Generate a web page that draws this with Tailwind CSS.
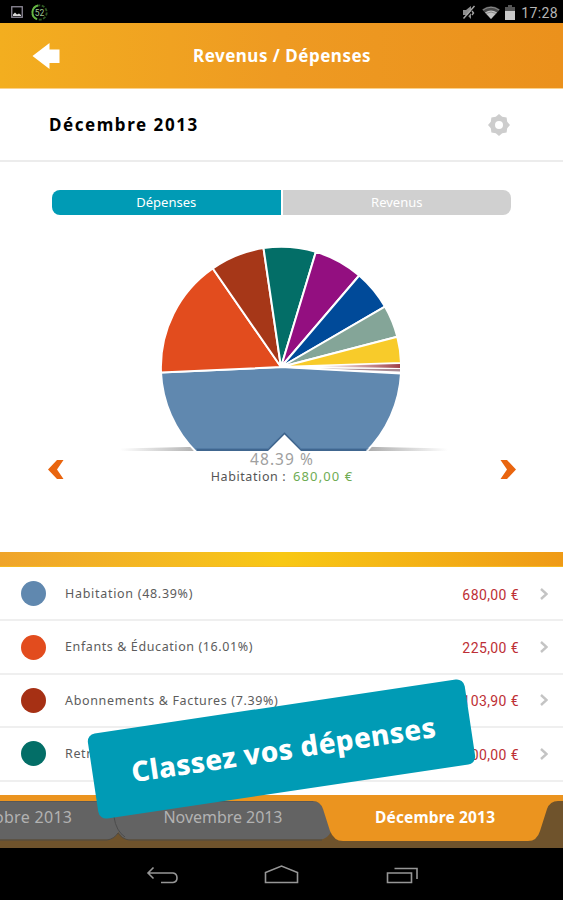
<!DOCTYPE html>
<html lang="fr">
  <head>
    <meta charset="UTF-8" />
    <meta name="viewport" content="width=device-width, initial-scale=1.0" />
    <title>Revenus / Dépenses</title>
    <script src="https://cdn.jsdelivr.net/npm/@tailwindcss/browser@4"></script>
  </head>
  <body class="bg-black">
    <div
      class="relative w-[563px] h-[900px] overflow-hidden flex flex-col bg-white font-['Noto_Sans',sans-serif]"
    >
      <!-- Status bar -->
      <div class="h-[23px] shrink-0 bg-black flex items-center justify-between pl-[11px] pr-[5px]">
        <div class="flex items-center gap-2 pt-px">
          <svg class="w-3 h-3" viewBox="0 0 12 12">
            <rect x=".75" y=".75" width="10.5" height="10.5" fill="none" stroke="#8f8b99" stroke-width="1.3" />
            <path d="M2 10V8.500L4 6.500L6 8.500L8 7.500L10 9V10Z" fill="#d8d8d8" />
          </svg>
          <svg class="w-[17px] h-[17px]" viewBox="0 0 17 17">
            <circle cx="8.500" cy="8.500" r="7.200" fill="none" stroke="#2d5a22" stroke-width="1.800" stroke-dasharray="3 1.500" />
            <path d="M7 1.500A7.200 7.200 0 0 0 6 15.200" fill="none" stroke="#66b843" stroke-width="1.800" />
            <text x="8.500" y="11.500" font-size="8.500" text-anchor="middle" fill="#9fc793" font-family="Roboto">52</text>
          </svg>
        </div>
        <div class="flex items-center pt-[2px]">
          <svg class="w-[14px] h-[15px] mr-[6px]" viewBox="0 0 14 15">
            <path d="M1 5H4L9 1V14L5 10H1Z" fill="#8d8d8d" />
            <path d="M13.500 2L2.500 14.500" stroke="#000" stroke-width="1.200" />
            <path d="M12.500 1L1.500 13.500M10 6L11.500 8L10 10" stroke="#a5a5a5" stroke-width="1.400" fill="none" />
          </svg>
          <svg class="w-[18px] h-[13px] mr-[5px]" viewBox="0 0 18 13">
            <path d="M0 3.500Q9-3 18 3.500L9 13Z" fill="#4a4a4a" />
            <path d="M3 6.500Q9 2.500 15 6.500L9 13Z" fill="#c2c2c2" />
            <path d="M1 4Q9-1.500 17 4M4 7.500Q9 4.500 14 7.500" stroke="#8b8b8b" fill="none" />
          </svg>
          <svg class="w-[10px] h-[15px] mr-[6px]" viewBox="0 0 10 15">
            <path d="M3 0H7V2H10V15H0V2H3Z" fill="#555" />
            <path d="M0 6H10V15H0Z" fill="#c9c9c9" />
          </svg>
          <span class="font-['Roboto'] text-[14px] leading-none tracking-[0.4px] text-[#b5b5b5]">17:28</span>
        </div>
      </div>

      <!-- Header -->
      <div
        class="h-[66px] shrink-0 flex items-center border-b border-[#fbd28c] bg-linear-to-r from-[#f3ae1f] via-[#ee9a22] to-[#eb911c]"
      >
        <svg class="w-[28px] h-[26px] ml-[32px]" viewBox="0 0 28 26">
          <path d="M.5 13L17.500 0V6.500H27.500V20H17.500V26Z" fill="#fff" />
        </svg>
        <h1 class="ml-[133px] text-[17px] font-bold text-white tracking-[0.5px] whitespace-nowrap">
          Revenus / Dépenses
        </h1>
      </div>

      <!-- Month -->
      <div class="h-[73px] shrink-0 flex items-center justify-between pl-[49px] pr-[53px] border-b-2 border-[#ececec]">
        <h2 class="text-[17px] font-bold text-black tracking-[1.55px]">Décembre 2013</h2>
        <svg class="w-[22px] h-[22px]" viewBox="-11 -11 22 22">
          <path
            d="M0-11L3.200-8.200L7.600-7.600L8.200-3.200L11 0L8.200 3.200L7.600 7.600L3.200 8.200L0 11L-3.200 8.200L-7.600 7.600L-8.200 3.200L-11 0L-8.200-3.200L-7.600-7.600L-3.200-8.200Z"
            fill="#cdcdcd"
          />
          <circle r="4" fill="#fff" />
        </svg>
      </div>

      <!-- Tabs -->
      <div class="mt-[28px] mx-[52px] h-[25px] shrink-0 grid grid-cols-2 gap-[2px] text-[13px] text-white text-center leading-[25px]">
        <div class="bg-[#009bb5] rounded-l-lg">Dépenses</div>
        <div class="bg-[#d0d0d0] rounded-r-lg">Revenus</div>
      </div>

      <!-- Chart -->
      <svg class="w-[563px] h-[237px] shrink-0" viewBox="0 215 563 237">
        <defs>
          <linearGradient id="shadow" x1="0" x2="1" y1="0" y2="0">
            <stop offset="0" stop-color="#808080" stop-opacity="0" />
            <stop offset=".3" stop-color="#808080" />
            <stop offset=".7" stop-color="#808080" />
            <stop offset="1" stop-color="#808080" stop-opacity="0" />
          </linearGradient>
          <radialGradient id="tiny" gradientUnits="userSpaceOnUse" cx="281" cy="367" r="119">
            <stop offset=".35" stop-color="#fff" />
            <stop offset="1" stop-color="#a04048" />
          </radialGradient>
        </defs>
        <path d="M120 451V448.500Q282 444 448 448.500V451Z" fill="url(#shadow)" opacity=".8" />
        <g stroke="#fff" stroke-width="2" stroke-linejoin="round">
          <path d="M281 367L401 373.500A120 120 0 0 1 281 487A120 120 0 0 1 161 372.500Z" fill="#6088af" />
          <path d="M281 367L161 372.500A120 120 0 0 1 212.800 268.500Z" fill="#e24c1e" />
          <path d="M281 367L212.800 268.500A120 120 0 0 1 263.500 248Z" fill="#a63718" />
          <path d="M281 367L263.500 248A120 120 0 0 1 315.900 251.800Z" fill="#036e67" />
          <path d="M281 367L315.900 251.800A120 120 0 0 1 359.200 275.500Z" fill="#930f80" />
          <path d="M281 367L359.200 275.500A120 120 0 0 1 384.900 306.600Z" fill="#004a99" />
          <path d="M281 367L384.900 306.600A120 120 0 0 1 397.300 336.800Z" fill="#84a598" />
          <path d="M281 367L397.300 336.800A120 120 0 0 1 401 363Z" fill="#f8cb2a" />
        </g>
        <path d="M281 367L400 364V368Z" fill="url(#tiny)" />
        <path d="M320 368.500L400 369V371.500Z" fill="#a98a93" />
        <path d="M281 367L400 373M281 367L400 368.500" stroke="#fff" stroke-width="1" />
        <!-- cut out with pointer -->
        <path d="M195 448H268L284.500 432L301 448H369L366 452H198Z" fill="#416a96" opacity=".45" />
        <path d="M197 450H268.500L284.500 433.500L300.500 450H366" fill="none" stroke="#3b6088" stroke-width="1.500" />
        <path d="M110 451H268L284.500 434.500L301 451H460V500H110Z" fill="#fff" />
      </svg>

      <!-- Selected category -->
      <div class="h-[100px] shrink-0 flex items-start justify-between pl-[48px] pr-[47px]">
        <svg class="w-[16px] h-[19px] mt-2" viewBox="0 0 16 19">
          <path d="M9 0H15.500L9 9.500L15.500 19H9L0 9.500Z" fill="#e9650f" />
        </svg>
        <div class="-mt-px text-center whitespace-nowrap">
          <div class="text-[15.500px] leading-[16px] tracking-[1.05px] text-[#a0a0a0]">48.39 %</div>
          <div class="text-[12.500px] leading-[18px] tracking-[0.6px] text-[#555]">
            Habitation&nbsp;: <span class="ml-[3px] text-[13px] tracking-[1.1px] text-[#6fac53]">680,00 €</span>
          </div>
        </div>
        <svg class="w-[16px] h-[19px] mt-2" viewBox="0 0 16 19">
          <path d="M7 0H.5L7 9.500L.5 19H7L16 9.500Z" fill="#e9650f" />
        </svg>
      </div>

      <div
        class="h-[15px] shrink-0 border-b border-[#f5b921] bg-linear-to-r from-[#efa42b] via-[#f8c814] to-[#ef9a16]"
      ></div>

      <!-- Category list -->
      <ul class="h-[228px] shrink-0 overflow-hidden pt-px text-[12.500px] text-[#5c5c5c]">
        <li class="h-[53.400px] flex items-center pl-[21px] pr-[15px] border-b-2 border-[#efefef]">
          <span class="w-[25px] h-[25px] rounded-full bg-[#6088af]"></span>
          <span class="ml-[19px] pt-px tracking-[0.7px]">Habitation (48.39%)</span>
          <span class="ml-auto pt-[3px] font-['Roboto'] text-[14px] tracking-[0.4px] text-[#bd2f35]">680,00 €</span>
          <svg class="w-[8px] h-[12px] ml-[21px]" viewBox="0 0 8 12">
            <path d="M1 1L6.500 6L1 11" fill="none" stroke="#c4c4c4" stroke-width="2.400" />
          </svg>
        </li>
        <li class="h-[53.400px] flex items-center pl-[21px] pr-[15px] border-b-2 border-[#efefef]">
          <span class="w-[25px] h-[25px] rounded-full bg-[#e24c1e]"></span>
          <span class="ml-[19px] pt-px tracking-[0.6px]">Enfants &amp; Éducation (16.01%)</span>
          <span class="ml-auto pt-[3px] font-['Roboto'] text-[14px] tracking-[0.4px] text-[#bd2f35]">225,00 €</span>
          <svg class="w-[8px] h-[12px] ml-[21px]" viewBox="0 0 8 12">
            <path d="M1 1L6.500 6L1 11" fill="none" stroke="#c4c4c4" stroke-width="2.400" />
          </svg>
        </li>
        <li class="h-[53.400px] flex items-center pl-[21px] pr-[15px] border-b-2 border-[#efefef]">
          <span class="w-[25px] h-[25px] rounded-full bg-[#a63014]"></span>
          <span class="ml-[19px] pt-px tracking-[0.65px]">Abonnements &amp; Factures (7.39%)</span>
          <span class="ml-auto pt-[3px] font-['Roboto'] text-[14px] tracking-[0.4px] text-[#bd2f35]">103,90 €</span>
          <svg class="w-[8px] h-[12px] ml-[21px]" viewBox="0 0 8 12">
            <path d="M1 1L6.500 6L1 11" fill="none" stroke="#c4c4c4" stroke-width="2.400" />
          </svg>
        </li>
        <li class="h-[53.400px] flex items-center pl-[21px] pr-[15px] border-b-2 border-[#efefef]">
          <span class="w-[25px] h-[25px] rounded-full bg-[#036e67]"></span>
          <span class="ml-[19px] pt-px tracking-[0.6px]">Retraits</span>
          <span class="ml-auto pt-[3px] font-['Roboto'] text-[14px] tracking-[0.4px] text-[#bd2f35]">100,00 €</span>
          <svg class="w-[8px] h-[12px] ml-[21px]" viewBox="0 0 8 12">
            <path d="M1 1L6.500 6L1 11" fill="none" stroke="#c4c4c4" stroke-width="2.400" />
          </svg>
        </li>
      </ul>

      <!-- Month tabs -->
      <svg class="w-[563px] h-[53px] shrink-0" viewBox="0 795 563 53" font-family="Noto Sans" font-size="16">
        <rect y="795" width="563" height="53" fill="#6f532c" />
        <path d="M0 801H120V828Q117 839 108 839.500H0Z" fill="#636363" />
        <path d="M113 801H312Q320 801 323 808L331 832Q327 839 321 839.500H128Q121 838 118 831Z" fill="#636363" />
        <path d="M114 817Q116 831 125 837" fill="none" stroke="#4c4c4c" />
        <path d="M0 840H107Q114 839 118 833Q122 839 129 840H322" fill="none" stroke="#4f4a42" />
        <path d="M0 795H563V801H558Q550 801 547 809L540 831Q537 841 528 841H343Q334 841 330 831L323 809Q320 801 313 801H0Z" fill="#eb941f" />
        <path d="M0 801.500H313" stroke="#585858" />
        <text x="-33" y="823" fill="#b2b2b2" textLength="105">Octobre 2013</text>
        <text x="163.500" y="823" fill="#b2b2b2" textLength="119">Novembre 2013</text>
        <text x="375" y="823" fill="#fff" font-weight="bold" font-size="15.500" textLength="120">Décembre 2013</text>
      </svg>

      <!-- Navigation bar -->
      <div class="h-[52px] shrink-0 bg-black">
        <svg class="w-[563px] h-[52px]" viewBox="0 848 563 52" fill="none" stroke="#969696" stroke-width="1.600">
          <path d="M153.500 867.500L148 873L153.500 878.500M148 873H173Q177 873.500 177 878Q177 882 173 882.500H161" />
          <path d="M265.500 882.500V872.500L281.500 866L297.500 872.500V882.500Z" />
          <path d="M387.500 873H411.500V882.500H387.500ZM394.500 868.500H417V879" />
        </svg>
      </div>

      <!-- Caption banner -->
      <div
        class="absolute left-[91px] top-[706px] w-[381px] h-[86px] -rotate-[8.500deg] rounded-lg bg-[#009bb5] flex items-center justify-center"
      >
        <span class="pl-1 text-[28px] font-extrabold text-white whitespace-nowrap tracking-[0.4px]">Classez vos dépenses</span>
      </div>
    </div>
  </body>
</html>
